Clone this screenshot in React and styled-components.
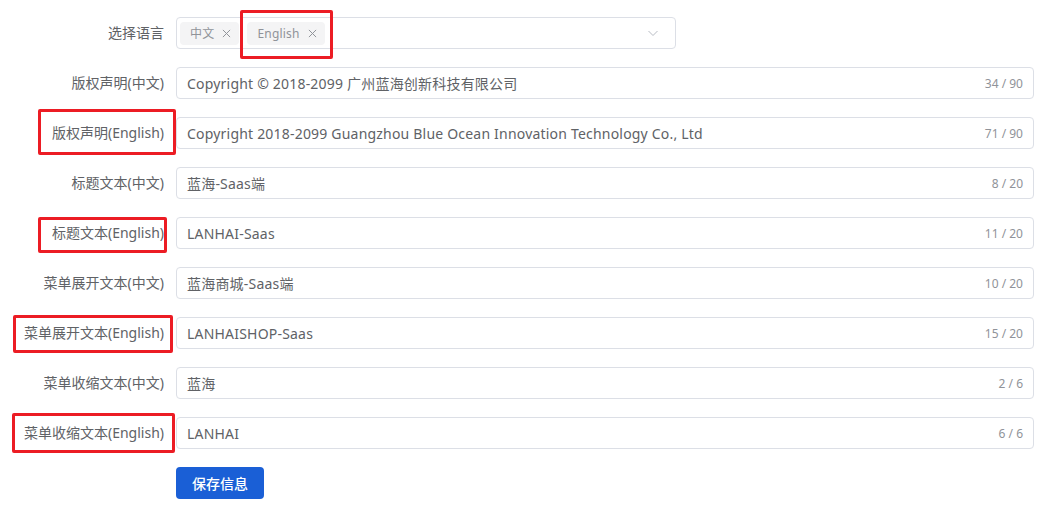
import React from "react"
import styled, {createGlobalStyle} from "styled-components"

const GlobalStyle = createGlobalStyle`
  * { box-sizing: border-box; }
  body {
    margin: 0;
    background: #fff;
    font-family: "Noto Sans", "Noto Sans CJK SC", sans-serif;
    color: #606266;
  }
`;

const Form = styled.div`
  display: flex;
  flex-direction: column;
  gap: 18px;
  padding: 17px 10px 0 0;
`;

const Row = styled.div`
  display: flex;
  align-items: center;
  height: 32px;
`;

const LabelCell = styled.div`
  width: 176px;
  flex: none;
  display: flex;
  justify-content: flex-end;
  padding-right: 12px;
`;

const Label = styled.label`
  position: relative;
  font-size: 14px;
  color: #606266;
  white-space: nowrap;
  line-height: 32px;
`;

// 红色标注框（截图上的标记）
const Mark = styled.span`
  position: absolute;
  left: ${p => p.$l}px;
  right: ${p => p.$r}px;
  top: ${p => p.$t}px;
  bottom: ${p => p.$b}px;
  border: 3px solid #ec1c24;
  border-radius: 2px;
  pointer-events: none;
`;

const Select = styled.div`
  width: 500px;
  height: 32px;
  border: 1px solid #dcdfe6;
  border-radius: 4px;
  display: flex;
  align-items: center;
  gap: 8px;
  padding: 0 16px 0 3px;
`;

const Tag = styled.span`
  position: relative;
  display: inline-flex;
  align-items: center;
  gap: 8px;
  height: 23px;
  padding: 0 8px 0 10px;
  background: #f4f4f5;
  border-radius: 4px;
  color: #909399;
  font-size: 12px;
  letter-spacing: 0.2px;
`;

const Close = styled.svg`
  flex: none;
`;

const Arrow = styled.svg`
  margin-left: auto;
`;

const Input = styled.div`
  flex: 1;
  height: 32px;
  border: 1px solid #dcdfe6;
  border-radius: 4px;
  display: flex;
  align-items: center;
  padding: 0 10px;
  font-size: 14px;
  color: #606266;
`;

const Value = styled.span`
  flex: 1;
  white-space: nowrap;
  overflow: hidden;
  letter-spacing: 0.2px;
`;

const Count = styled.span`
  font-size: 12px;
  color: #909399;
`;

const Button = styled.button`
  height: 32px;
  width: 88px;
  border: none;
  border-radius: 4px;
  background: #1a5fd6;
  color: #fff;
  font-family: inherit;
  font-size: 14px;
  font-weight: 500;
`;

const fields = [
  {label: "版权声明(中文)", value: "Copyright © 2018-2099 广州蓝海创新科技有限公司", count: "34 / 90"},
  {label: "版权声明(English)", value: "Copyright 2018-2099 Guangzhou Blue Ocean Innovation Technology Co., Ltd", count: "71 / 90", mark: {l: -14, r: -12, t: -8, b: -6}},
  {label: "标题文本(中文)", value: "蓝海-Saas端", count: "8 / 20"},
  {label: "标题文本(English)", value: "LANHAI-Saas", count: "11 / 20", mark: {l: -14, r: -3, t: 0, b: -4}},
  {label: "菜单展开文本(中文)", value: "蓝海商城-Saas端", count: "10 / 20"},
  {label: "菜单展开文本(English)", value: "LANHAISHOP-Saas", count: "15 / 20", mark: {l: -11, r: -9, t: -2, b: -4}},
  {label: "菜单收缩文本(中文)", value: "蓝海", count: "2 / 6"},
  {label: "菜单收缩文本(English)", value: "LANHAI", count: "6 / 6", mark: {l: -12, r: -11, t: -4, b: -4}},
];

const MarkedLabel = ({children, mark}) => (
  <Label>
    {children}
    {mark && <Mark $l={mark.l} $r={mark.r} $t={mark.t} $b={mark.b}/>}
  </Label>
);

const CloseIcon = () => (
  <Close width="9" height="9" viewBox="0 0 10 10">
    <path d="M1 1l8 8M9 1l-8 8" stroke="#909399" strokeWidth="1.1" fill="none"/>
  </Close>
);

export default function App() {
  return (
    <>
      <GlobalStyle/>
      <Form>
        <Row>
          <LabelCell><Label>选择语言</Label></LabelCell>
          <Select>
            <Tag>中文<CloseIcon/></Tag>
            <Tag>
              English<CloseIcon/>
              <Mark $l={-7} $r={-8} $t={-12} $b={-14}/>
            </Tag>
            <Arrow width="12" height="12" viewBox="0 0 12 12">
              <path d="M1.5 4l4.5 4.5L10.5 4" fill="none" stroke="#b8bcc4" strokeWidth="1"/>
            </Arrow>
          </Select>
        </Row>
        {fields.map((f, i) => (
          <Row key={i}>
            <LabelCell><MarkedLabel mark={f.mark}>{f.label}</MarkedLabel></LabelCell>
            <Input>
              <Value>{f.value}</Value>
              <Count>{f.count}</Count>
            </Input>
          </Row>
        ))}
        <Row>
          <LabelCell/>
          <Button>保存信息</Button>
        </Row>
      </Form>
    </>
  )
}
